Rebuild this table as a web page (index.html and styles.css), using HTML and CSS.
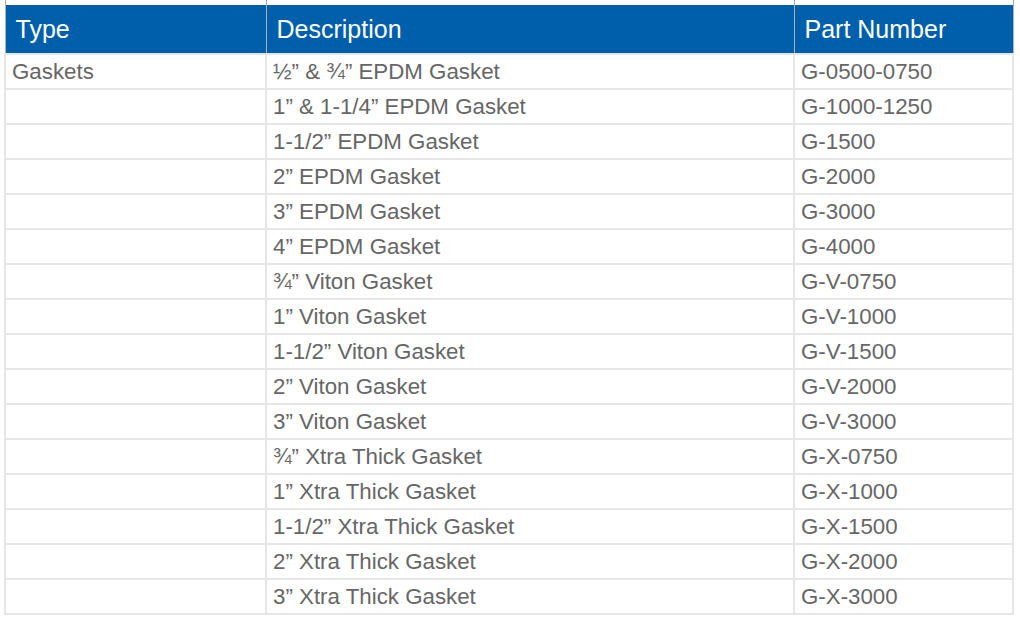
FILE: index.html
```html
<!DOCTYPE html>
<html>
<head>
<meta charset="utf-8">
<link rel="stylesheet" href="styles.css">
</head>
<body>
<table class="parts">
  <colgroup>
    <col class="c-type">
    <col class="c-desc">
    <col class="c-part">
  </colgroup>
  <tr class="strip"><td></td><td></td><td></td></tr>
  <tr class="head"><th>Type</th><th>Description</th><th>Part Number</th></tr>
  <tr><td>Gaskets</td><td>½” &amp; ¾” EPDM Gasket</td><td>G-0500-0750</td></tr>
  <tr><td></td><td>1” &amp; 1-1/4” EPDM Gasket</td><td>G-1000-1250</td></tr>
  <tr><td></td><td>1-1/2” EPDM Gasket</td><td>G-1500</td></tr>
  <tr><td></td><td>2” EPDM Gasket</td><td>G-2000</td></tr>
  <tr><td></td><td>3” EPDM Gasket</td><td>G-3000</td></tr>
  <tr><td></td><td>4” EPDM Gasket</td><td>G-4000</td></tr>
  <tr><td></td><td>¾” Viton Gasket</td><td>G-V-0750</td></tr>
  <tr><td></td><td>1” Viton Gasket</td><td>G-V-1000</td></tr>
  <tr><td></td><td>1-1/2” Viton Gasket</td><td>G-V-1500</td></tr>
  <tr><td></td><td>2” Viton Gasket</td><td>G-V-2000</td></tr>
  <tr><td></td><td>3” Viton Gasket</td><td>G-V-3000</td></tr>
  <tr><td></td><td>¾” Xtra Thick Gasket</td><td>G-X-0750</td></tr>
  <tr><td></td><td>1” Xtra Thick Gasket</td><td>G-X-1000</td></tr>
  <tr><td></td><td>1-1/2” Xtra Thick Gasket</td><td>G-X-1500</td></tr>
  <tr><td></td><td>2” Xtra Thick Gasket</td><td>G-X-2000</td></tr>
  <tr><td></td><td>3” Xtra Thick Gasket</td><td>G-X-3000</td></tr>
</table>
</body>
</html>
```

FILE: styles.css
```css
html, body {
  margin: 0;
  padding: 0;
  background: #ffffff;
}

body {
  font-family: "Liberation Sans", Arial, Helvetica, sans-serif;
}

.parts {
  margin-left: 4px;
  width: 1008px;
  table-layout: fixed;
  border-collapse: collapse;
}

.c-type { width: 261px; }
.c-desc { width: 528px; }
.c-part { width: 219px; }

.parts .strip {
  height: 5px;
}

.parts .strip td {
  height: 5px;
  padding: 0;
  font-size: 0;
  line-height: 0;
  border: none;
  border-left: 1px solid #a8a8a8;
  border-right: 1px solid #a8a8a8;
}

.parts .head {
  height: 48px;
}

.head th {
  height: 48px;
  padding: 0 0 0 10px;
  background: #005fab;
  color: #ffffff;
  font-size: 25px;
  font-weight: normal;
  text-align: left;
  border: none;
  border-left: 1px solid #a8b4c0;
  border-right: 1px solid #a8b4c0;
}

.parts tr {
  height: 35px;
}

.parts td {
  padding: 0 0 0 6px;
  color: #666666;
  font-size: 22.3px;
  border: 2px solid #e6e6e6;
  vertical-align: middle;
  white-space: nowrap;
}
```
